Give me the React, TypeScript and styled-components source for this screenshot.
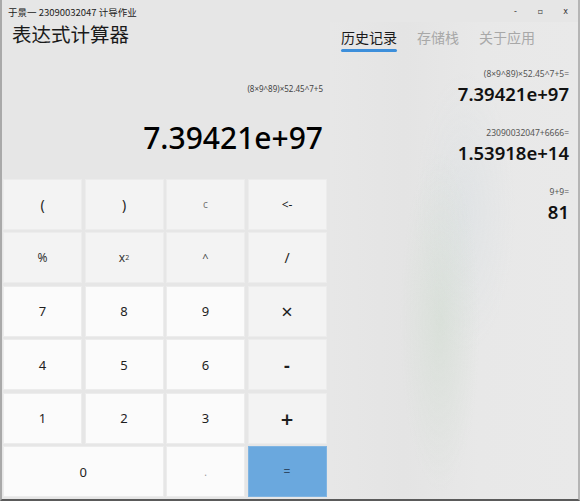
import React from "react";
import styled, { createGlobalStyle } from "styled-components";

const Global = createGlobalStyle`
  html, body { margin: 0; padding: 0; background: #e6e6e6; }
  body { font-family: "Noto Sans", "Noto Sans CJK SC", sans-serif; }
  * { box-sizing: border-box; }
`;

const Window = styled.div`
  width: 580px;
  height: 501px;
  display: flex;
  flex-direction: column;
  background: #e6e6e6;
  border-left: 2px solid #a9a9a9;
  border-right: 2px solid #b5b5b5;
  border-bottom: 2px solid #5a5a5a;
  overflow: hidden;
`;

const TitleBar = styled.div`
  height: 24px;
  display: flex;
  align-items: center;
  justify-content: space-between;
  padding: 2px 0 0 6px;
`;

const TitleText = styled.div`
  font-family: "Noto Sans CJK SC", sans-serif;
  font-size: 9.5px;
  color: #222;
`;

const Controls = styled.div`
  display: flex;
  align-items: center;
  height: 100%;
`;

const Ctrl = styled.div`
  width: 25px;
  text-align: center;
  font-size: 8px;
  color: #333;
  font-family: "DejaVu Sans", sans-serif;
`;

const Body = styled.div`
  flex: 1;
  display: grid;
  grid-template-columns: 328px 1fr;
`;

const LeftPane = styled.div`
  display: flex;
  flex-direction: column;
  padding-left: 1px;
`;

const AppTitle = styled.div`
  height: 24px;
  line-height: 24px;
  padding-left: 9px;
  font-family: "Noto Sans CJK SC", sans-serif;
  font-size: 19.5px;
  color: #1a1a1a;
`;

const Display = styled.div`
  height: 133px;
  display: flex;
  flex-direction: column;
  align-items: flex-end;
  padding: 37px 7px 0 0;
`;

const ExprLine = styled.div`
  font-size: 8px;
  line-height: 11px;
  color: #444;
`;

const ResultLine = styled.div`
  margin-top: 25px;
  font-size: 30px;
  line-height: 38px;
  font-weight: 500;
  color: #000;
`;

const Keypad = styled.div`
  display: grid;
  grid-template-columns: repeat(4, 79px);
  grid-template-rows: repeat(6, 51px);
  gap: 2.5px;
  padding-bottom: 2px;
`;

type Tone = "fn" | "num" | "op" | "eq";

const Key = styled.div<{ $tone: Tone; $span?: number; $size?: number; $color?: string; $weight?: number }>`
  grid-column: span ${(p) => p.$span ?? 1};
  display: flex;
  align-items: center;
  justify-content: center;
  font-size: ${(p) => p.$size ?? 13}px;
  font-weight: ${(p) => p.$weight ?? 400};
  color: ${(p) => p.$color ?? "#1e1e1e"};
  background: ${(p) =>
    p.$tone === "num" ? "#fbfbfb" : p.$tone === "eq" ? "#6aa8de" : "#f3f3f3"};
  border: 1px solid ${(p) => (p.$tone === "eq" ? "#7fb4e2" : "#ececec")};
`;

const Sup = styled.sup`
  font-size: 7px;
  vertical-align: 5px;
`;

const RightPane = styled.div`
  display: flex;
  flex-direction: column;
  background:
    radial-gradient(ellipse 40px 170px at 110px 300px, rgba(205, 218, 205, 0.5), rgba(230,230,230,0) 100%),
    radial-gradient(ellipse 50px 140px at 135px 190px, rgba(215, 222, 226, 0.45), rgba(230,230,230,0) 100%),
    linear-gradient(90deg, #e7e7e7 0%, #e4e4e4 30%, #e8e8e8 60%, #e9e9e9 100%);
`;

const Tabs = styled.div`
  display: flex;
  gap: 20px;
  padding: 5px 0 0 11px;
`;

const Tab = styled.div<{ $active?: boolean }>`
  position: relative;
  font-family: "Noto Sans CJK SC", sans-serif;
  font-size: 14px;
  line-height: 20px;
  height: 30px;
  color: ${(p) => (p.$active ? "#1a1a1a" : "#a8a8a8")};
  &::after {
    content: "";
    display: ${(p) => (p.$active ? "block" : "none")};
    position: absolute;
    left: 0;
    right: 0;
    top: 22px;
    height: 3px;
    border-radius: 2px;
    background: #3d8fdb;
  }
`;

const History = styled.div`
  display: flex;
  flex-direction: column;
  align-items: flex-end;
  padding: 11px 9px 0 0;
  gap: 21px;
`;

const Entry = styled.div`
  display: flex;
  flex-direction: column;
  align-items: flex-end;
`;

const EntryExpr = styled.div`
  font-size: 8.5px;
  line-height: 12px;
  color: #555;
`;

const EntryResult = styled.div`
  margin-top: 2px;
  font-size: 18.5px;
  line-height: 24px;
  font-weight: 600;
  color: #111;
`;

const history = [
  { expr: "(8×9^89)×52.45^7+5=", result: "7.39421e+97" },
  { expr: "23090032047+6666=", result: "1.53918e+14" },
  { expr: "9+9=", result: "81" },
];

export default function App() {
  return (
    <>
      <Global />
      <Window>
        <TitleBar>
          <TitleText>于景一 23090032047 计导作业</TitleText>
          <Controls>
            <Ctrl>-</Ctrl>
            <Ctrl>▫</Ctrl>
            <Ctrl>x</Ctrl>
          </Controls>
        </TitleBar>
        <Body>
          <LeftPane>
            <AppTitle>表达式计算器</AppTitle>
            <Display>
              <ExprLine>(8×9^89)×52.45^7+5</ExprLine>
              <ResultLine>7.39421e+97</ResultLine>
            </Display>
            <Keypad>
              <Key $tone="fn" $size={14}>(</Key>
              <Key $tone="fn" $size={14}>)</Key>
              <Key $tone="fn" $size={10} $color="#777">c</Key>
              <Key $tone="fn" $size={12}>&lt;-</Key>
              <Key $tone="fn" $size={12} $color="#333">%</Key>
              <Key $tone="fn" $size={12} $color="#333">x<Sup>2</Sup></Key>
              <Key $tone="fn" $size={11} $color="#444">^</Key>
              <Key $tone="fn" $size={14}>/</Key>
              <Key $tone="num">7</Key>
              <Key $tone="num">8</Key>
              <Key $tone="num">9</Key>
              <Key $tone="op" $size={20}>×</Key>
              <Key $tone="num">4</Key>
              <Key $tone="num">5</Key>
              <Key $tone="num">6</Key>
              <Key $tone="op" $size={18} $weight={700}>-</Key>
              <Key $tone="num">1</Key>
              <Key $tone="num">2</Key>
              <Key $tone="num">3</Key>
              <Key $tone="op" $size={22} $weight={600}>+</Key>
              <Key $tone="num" $span={2}>0</Key>
              <Key $tone="num" $size={10} $color="#999">.</Key>
              <Key $tone="eq" $size={12} $color="#2f4a66">=</Key>
            </Keypad>
          </LeftPane>
          <RightPane>
            <Tabs>
              <Tab $active>历史记录</Tab>
              <Tab>存储栈</Tab>
              <Tab>关于应用</Tab>
            </Tabs>
            <History>
              {history.map((h) => (
                <Entry key={h.expr}>
                  <EntryExpr>{h.expr}</EntryExpr>
                  <EntryResult>{h.result}</EntryResult>
                </Entry>
              ))}
            </History>
          </RightPane>
        </Body>
      </Window>
    </>
  );
}
